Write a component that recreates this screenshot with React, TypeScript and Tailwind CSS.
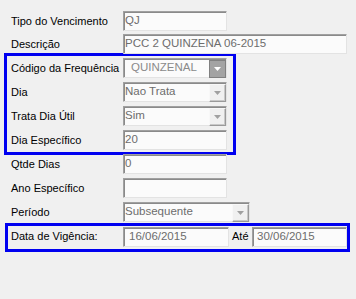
const font = { fontFamily: '"Liberation Sans", Arial, sans-serif' };

const Field = ({ value, w, pad = "pl-[1px]" }: { value: string; w: string; pad?: string }) => (
  <div
    className={`${w} shrink-0 h-[20px] flex items-center ${pad} bg-[#fbfbfb] border border-t-[#a0a0a0] border-l-[#a0a0a0] border-r-[#e3e3e3] border-b-[#e3e3e3] shadow-[inset_1px_1px_0_#8a8a8a] text-[#6d6d6d] text-[11.5px] leading-none whitespace-nowrap overflow-hidden`}
  >
    {value}
  </div>
);

const Arrow = ({ color }: { color: string }) => (
  <svg width="7" height="4" viewBox="0 0 7 4">
    <polygon points="0,0 7,0 3.5,4" fill={color} />
  </svg>
);

const Select = ({ value, w, active = false }: { value: string; w: string; active?: boolean }) => (
  <div
    className={`${w} shrink-0 h-[20px] flex items-center bg-[#fbfbfb] border border-t-[#a0a0a0] border-l-[#a0a0a0] border-r-[#e3e3e3] border-b-[#e3e3e3] shadow-[inset_1px_1px_0_#8a8a8a] text-[#6d6d6d] text-[11.5px] leading-none whitespace-nowrap`}
  >
    <span className={`flex-1 ${active ? "pl-[7px] text-[#8a8a8a]" : "pl-[1px]"}`}>{value}</span>
    {active ? (
      <div className="w-[17px] h-[18px] mt-[1px] flex items-center justify-center bg-[#a3a3a3] border border-[#808080]">
        <Arrow color="#ffffff" />
      </div>
    ) : (
      <div className="w-[17px] h-[18px] mt-[1px] flex items-center justify-center bg-[#f0f0f0] border border-t-[#f8f8f8] border-l-[#f8f8f8] border-r-[#9a9a9a] border-b-[#9a9a9a] shadow-[inset_-1px_-1px_0_#c8c8c8]">
        <Arrow color="#a0a0a0" />
      </div>
    )}
  </div>
);

const Row = ({ label, lw, className = "", children }: { label: string; lw: string; className?: string; children: React.ReactNode }) => (
  <div className={`flex items-center h-[20px] ${className}`}>
    <div className={`${lw} shrink-0 whitespace-nowrap text-[11px] text-black leading-none`}>{label}</div>
    {children}
  </div>
);

export default function App() {
  return (
    <div className="w-[356px] h-[299px] bg-[#f0f0f0] overflow-hidden pt-[11px]" style={font}>
      <div className="pl-[11px]">
        <Row label="Tipo do Vencimento" lw="w-[112px]">
          <Field value="QJ" w="w-[104px]" />
        </Row>
        <Row label="Descrição" lw="w-[112px]" className="mt-[3px]">
          <Field value="PCC 2 QUINZENA 06-2015" w="w-[224px]" />
        </Row>
      </div>

      <div className="ml-[4px] mt-[-1px] w-[232px] border-[3px] border-[#0000f0] pl-[4px] pt-[2px] pb-[2px]">
        <Row label="Código da Frequência" lw="w-[112px]">
          <Select value="QUINZENAL" w="w-[104px]" active />
        </Row>
        <Row label="Dia" lw="w-[112px]" className="mt-[4px]">
          <Select value="Nao Trata" w="w-[104px]" />
        </Row>
        <Row label="Trata Dia Útil" lw="w-[112px]" className="mt-[4px]">
          <Select value="Sim" w="w-[104px]" />
        </Row>
        <Row label="Dia Específico" lw="w-[112px]" className="mt-[4px]">
          <Field value="20" w="w-[104px]" />
        </Row>
      </div>

      <div className="pl-[11px]">
        <Row label="Qtde Dias" lw="w-[112px]" className="mt-[-1px]">
          <Field value="0" w="w-[104px]" />
        </Row>
        <Row label="Ano Específico" lw="w-[112px]" className="mt-[4px]">
          <Field value="" w="w-[104px]" />
        </Row>
        <Row label="Período" lw="w-[112px]" className="mt-[4px]">
          <Select value="Subsequente" w="w-[127px]" />
        </Row>
      </div>

      <div className="ml-[5px] mt-[1px] w-[345px] border-[3px] border-[#0000f0] pl-[3px] pb-[2px]">
        <div className="flex items-center h-[21px]">
          <div className="w-[112px] shrink-0 whitespace-nowrap text-[11px] text-black leading-none">Data de Vigência:</div>
          <Field value="16/06/2015" w="w-[106px] pl-[5px]" />
          <div className="w-[23px] shrink-0 pl-[3px] text-[11px] text-black leading-none">Até</div>
          <Field value="30/06/2015" w="w-[95px] pl-[4px]" />
        </div>
      </div>
    </div>
  );
}
